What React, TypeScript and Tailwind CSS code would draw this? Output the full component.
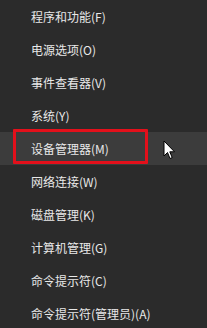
import { useState } from "react";

const items = [
    "程序和功能(F)",
    "电源选项(O)",
    "事件查看器(V)",
    "系统(Y)",
    "设备管理器(M)",
    "网络连接(W)",
    "磁盘管理(K)",
    "计算机管理(G)",
    "命令提示符(C)",
    "命令提示符(管理员)(A)",
]

export default function App() {
    const [active] = useState(4)

    return (
        <div className="w-[207px] h-[328px] overflow-hidden bg-[#2b2b2b] text-[#e8e8e8] text-[12px]" style={{ fontFamily: '"Noto Sans CJK SC", "Liberation Sans", sans-serif' }}>
            <div className="flex flex-col">
                {
                    items.map((label, key) => <MenuRow key={key} label={label} active={key === active} />)
                }
            </div>
        </div>
    )
}

const MenuRow = ({ label, active }: { label: string, active: boolean }) => {
    return (
        <div className={`relative h-[33px] flex items-center pl-[31px] ${active ? "bg-[#3c3c3c]" : ""}`}>
            <span className="leading-none">{label}</span>
            {active && (
                <>
                    <div className="absolute left-[13px] w-[135px] top-[-3px] h-[35px] border-[3px] border-[#e3101b] rounded-[1px]"></div>
                    <Cursor />
                </>
            )}
        </div>
    )
}

const Cursor = () => (
    <svg className="absolute left-[163px] top-[8px]" width="13" height="20" viewBox="0 0 13 20">
        <path d="M1 1 L1 16 L4.5 12.5 L7 18.5 L9.2 17.6 L6.8 11.8 L11.5 11.8 Z" fill="#ffffff" stroke="#000000" strokeWidth="1" strokeLinejoin="miter" />
    </svg>
)
